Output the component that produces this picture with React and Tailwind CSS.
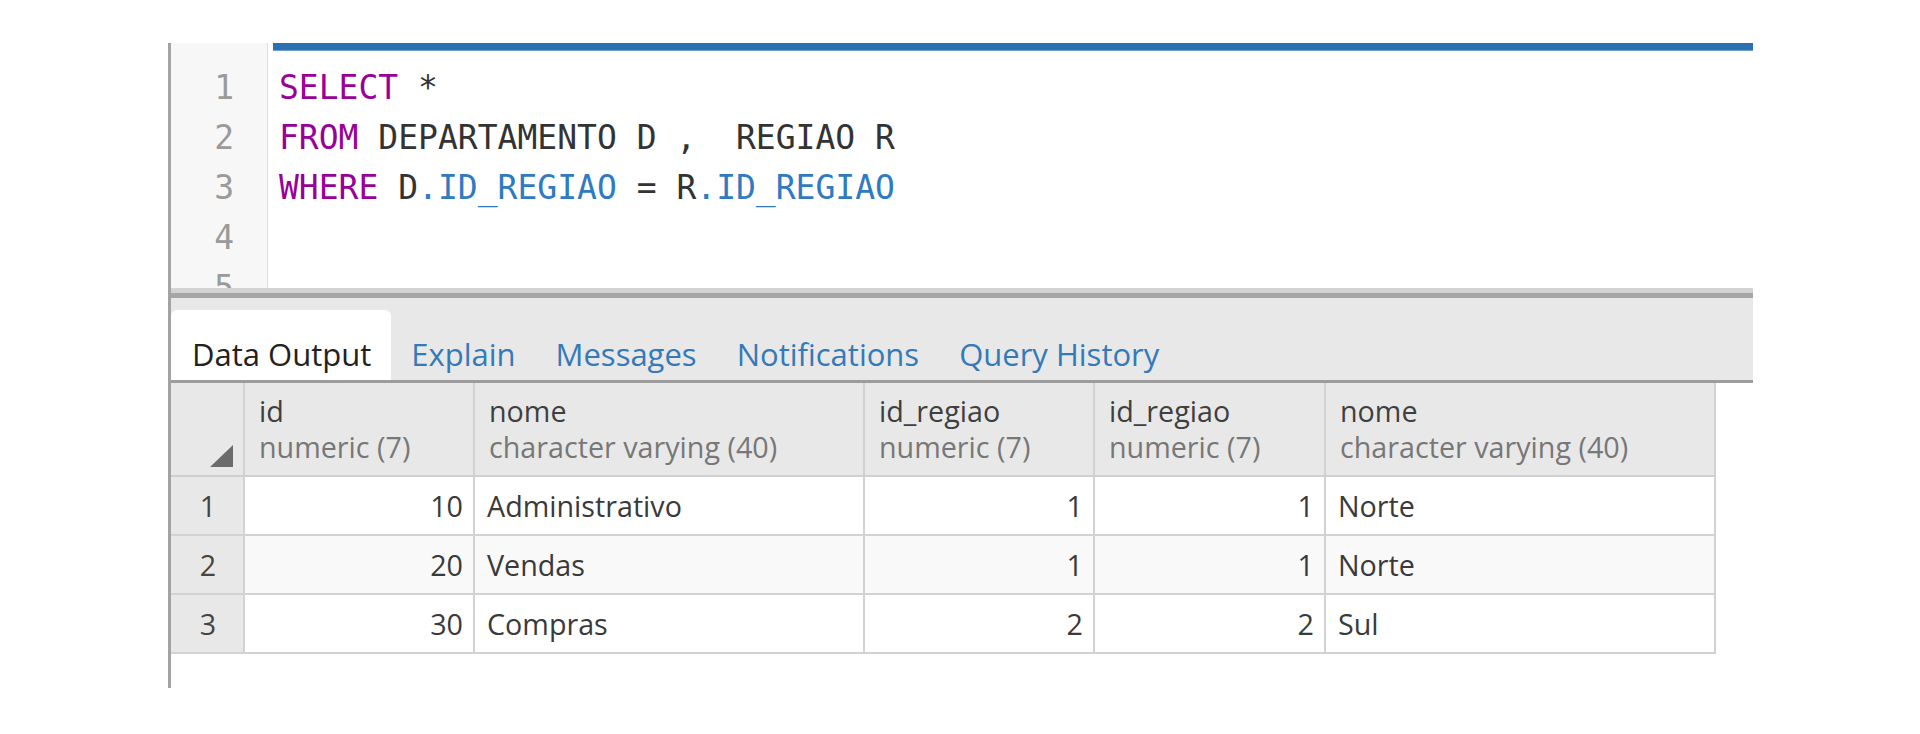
import React from 'react';

const ui = { fontFamily: '"Open Sans", "Noto Sans", sans-serif' };
const mono = { fontFamily: '"DejaVu Sans Mono", "Liberation Mono", monospace' };

const KW = 'text-[#990099]';
const ID = 'text-[#2f7ac2]';

const lines = [
  [[KW, 'SELECT'], ['', ' *']],
  [[KW, 'FROM'], ['', ' DEPARTAMENTO D ,  REGIAO R']],
  [[KW, 'WHERE'], ['', ' D'], [ID, '.ID_REGIAO'], ['', ' = R'], [ID, '.ID_REGIAO']],
  [],
  [],
];

const tabs = ['Data Output', 'Explain', 'Messages', 'Notifications', 'Query History'];

const columns = [
  { name: 'id', type: 'numeric (7)', w: 'w-[230px]', num: true },
  { name: 'nome', type: 'character varying (40)', w: 'w-[390px]' },
  { name: 'id_regiao', type: 'numeric (7)', w: 'w-[230px]', num: true },
  { name: 'id_regiao', type: 'numeric (7)', w: 'w-[231px]', num: true },
  { name: 'nome', type: 'character varying (40)', w: 'w-[390px]' },
];

const rows = [
  ['10', 'Administrativo', '1', '1', 'Norte'],
  ['20', 'Vendas', '1', '1', 'Norte'],
  ['30', 'Compras', '2', '2', 'Sul'],
];

function Editor() {
  return (
    <div className="flex h-[245px] overflow-hidden bg-white">
      <div className="w-[97px] shrink-0 bg-[#f7f7f7] border-r border-[#dddddd] pt-[20px] text-right pr-[33px] text-[#9a9a9a] text-[33px]" style={mono}>
        {lines.map((_, i) => (
          <div key={i} className="h-[50px] leading-[50px]">{i + 1}</div>
        ))}
      </div>
      <div className="flex-1 pl-[5px]">
        <div className="h-[8px] bg-[#2a70b3] border-b border-[#6d9fd0]" />
        <div className="pt-[12px] pl-[6px] text-[33px] text-[#333333] whitespace-pre" style={mono}>
          {lines.map((parts, i) => (
            <div key={i} className="h-[50px] leading-[50px]">
              {parts.map(([c, t], j) => (
                <span key={j} className={c}>{t}</span>
              ))}
            </div>
          ))}
        </div>
      </div>
    </div>
  );
}

function Tabs() {
  return (
    <div className="h-[85px] bg-[#e8e8e8] border-b-[3px] border-[#9c9c9c] flex items-end" style={ui}>
      {tabs.map((t, i) => (
        <div
          key={t}
          className={
            'h-[70px] px-[20px] pb-[5px] flex items-end text-[31px] leading-[42px] ' +
            (i === 0 ? 'bg-white rounded-t-[6px] text-[#222222] pl-[21px]' : 'text-[#347ab8]')
          }
        >
          {t}
        </div>
      ))}
    </div>
  );
}

function SortCorner() {
  return (
    <svg width="23" height="22" viewBox="0 0 23 22">
      <polygon points="0,22 23,0 23,22" fill="#6b6b6b" />
    </svg>
  );
}

function Grid() {
  return (
    <div className="flex flex-col w-[1545px]" style={ui}>
      <div className="flex h-[94px] bg-[#e8e8e8] border-b-2 border-[#cfcfcf]">
        <div className="w-[74px] shrink-0 border-r-2 border-[#d2d2d2] flex items-end justify-end pr-[10px] pb-[8px]">
          <SortCorner />
        </div>
        {columns.map((c, i) => (
          <div key={i} className={c.w + ' shrink-0 border-r-2 border-[#d2d2d2] pl-[14px] pt-[10px] text-[28.7px] leading-[36px]'}>
            <div className="text-[#3f3f3f]">{c.name}</div>
            <div className="text-[#777777]">{c.type}</div>
          </div>
        ))}
      </div>
      {rows.map((r, ri) => (
        <div key={ri} className={'flex h-[59px] border-b-2 border-[#d2d2d2] ' + (ri === 1 ? 'bg-[#f9f9f9]' : 'bg-white')}>
          <div className="w-[74px] shrink-0 bg-[#e8e8e8] border-r-2 border-[#d2d2d2] flex items-center justify-center pl-[2px] text-[28.7px] text-[#444444]">
            {ri + 1}
          </div>
          {r.map((v, ci) => (
            <div
              key={ci}
              className={
                columns[ci].w +
                ' shrink-0 border-r-2 border-[#d2d2d2] flex items-center text-[28.7px] text-[#3a3a3a] ' +
                (columns[ci].num ? 'justify-end pr-[10px]' : 'pl-[12px]')
              }
            >
              {v}
            </div>
          ))}
        </div>
      ))}
    </div>
  );
}

export default function App() {
  return (
    <div className="w-[1920px] h-[734px] bg-white pt-[43px] pl-[168px]">
      <div className="w-[1585px] h-[645px] border-l-[3px] border-[#a3a3a3] flex flex-col">
        <Editor />
        <div className="h-[5px] bg-[#d3d3d3]" />
        <div className="h-[5px] bg-[#a6a6a6]" />
        <Tabs />
        <Grid />
      </div>
    </div>
  );
}
